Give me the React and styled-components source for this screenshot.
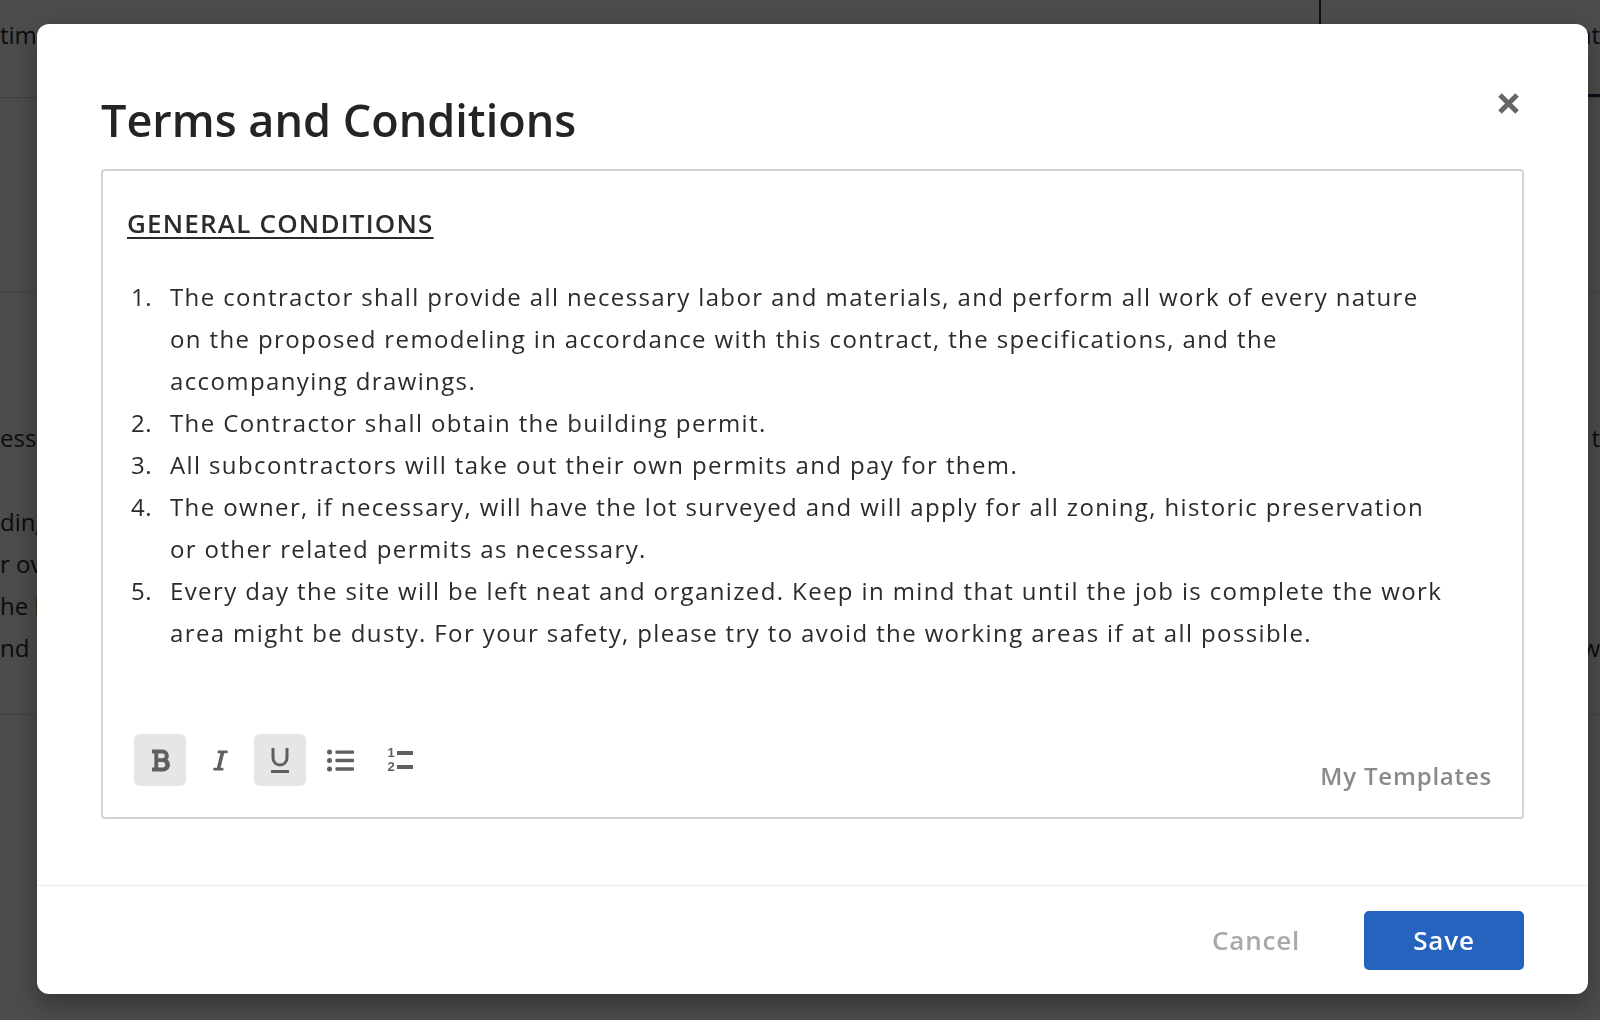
import React from 'react';
import styled, { createGlobalStyle } from 'styled-components';
import { FaBold, FaItalic, FaListUl } from 'react-icons/fa';

const GlobalStyle = createGlobalStyle`
  html, body { margin: 0; padding: 0; }
  body {
    font-family: 'Open Sans', Lato, 'Liberation Sans', sans-serif;
    background: #fff;
    color: #2b2b2b;
  }
  * { box-sizing: border-box; }
`;

// page behind the dialog
const Page = styled.div`
  width: 1600px;
  height: 1020px;
  overflow: hidden;
  background: #fff;
`;

const TopBar = styled.header`
  height: 98px;
  display: flex;
  border-bottom: 1px solid #d6d6d6;
`;

const TopMain = styled.div`
  flex: 1;
  display: flex;
  align-items: flex-start;
  gap: 64px;
  padding-top: 18px;
  font-size: 24px;
  white-space: nowrap;
`;

const JobTitle = styled.span`
  font-weight: 600;
`;

const Saved = styled.span`
  display: flex;
  align-items: center;
  gap: 10px;
  margin-left: 240px;
  color: #555;
`;

const Dot = styled.span`
  width: 14px;
  height: 14px;
  border-radius: 50%;
  background: #2e9b4f;
`;

const TopAside = styled.div`
  width: 281px;
  border-left: 2px solid #1d2d55;
  border-bottom: 3px solid #1d2d55;
  display: flex;
  justify-content: flex-end;
  padding-top: 18px;
  font-size: 24px;
  color: #1d2d55;
`;

const Section = styled.section`
  height: ${(p) => p.$h}px;
  border-bottom: 1px solid #dcdcdc;
  padding-top: ${(p) => p.$pad || 0}px;
  font-size: 24px;
  line-height: 42px;
  white-space: nowrap;
`;

const PageLine = styled.p`
  margin: 0 0 ${(p) => p.$gap || 0}px;
  display: flex;
  justify-content: space-between;
`;

// dialog
const Overlay = styled.div`
  position: fixed;
  inset: 0;
  background: rgba(0, 0, 0, 0.7);
  display: flex;
  align-items: flex-start;
  padding: 24px 0 0 37px;
`;

const Modal = styled.div`
  width: 1551px;
  height: 970px;
  background: #fff;
  border-radius: 12px;
  box-shadow: 0 10px 30px rgba(0, 0, 0, 0.35);
  display: flex;
  flex-direction: column;
`;

const ModalHead = styled.div`
  display: flex;
  justify-content: space-between;
  align-items: flex-start;
  padding: 70px 64px 0;
`;

const Title = styled.h1`
  margin: 0;
  font-size: 45px;
  line-height: 52px;
  font-weight: 600;
  color: #242424;
`;

const CloseButton = styled.button`
  width: 32px;
  height: 32px;
  margin-top: -7px;
  border: 0;
  padding: 0;
  background: none;
  display: flex;
  align-items: center;
  justify-content: center;
  cursor: pointer;
`;

const Editor = styled.div`
  margin: 23px 64px 0;
  height: 650px;
  border: 2px solid #d2d2d2;
  border-radius: 4px;
  display: flex;
  flex-direction: column;
`;

const EditorBody = styled.div`
  flex: 1;
  padding: 37px 70px 0 24px;
  color: #2b2b2b;
`;

const SectionHeading = styled.h2`
  margin: 0;
  font-size: 26px;
  line-height: 30px;
  font-weight: 600;
  letter-spacing: 1.2px;
  text-decoration: underline;
  text-decoration-thickness: 2px;
  text-underline-offset: 4px;
`;

const List = styled.ol`
  list-style: none;
  margin: 38px 0 0;
  padding: 0;
`;

const Item = styled.li`
  display: grid;
  grid-template-columns: 43px 1fr;
  font-size: 24px;
  line-height: 42px;
  letter-spacing: 1.38px;
`;

const Num = styled.span`
  text-align: right;
  padding-right: 18px;
  letter-spacing: 0.5px;
`;

const Toolbar = styled.div`
  display: flex;
  justify-content: space-between;
  align-items: flex-end;
  padding: 0 30px 31px 31px;
`;

const ToolGroup = styled.div`
  display: flex;
  gap: 8px;
`;

const ToolButton = styled.button`
  width: 52px;
  height: 52px;
  border: 0;
  border-radius: 6px;
  padding: 0;
  background: ${(p) => (p.$active ? '#e6e6e6' : 'transparent')};
  color: #5f5f5f;
  display: flex;
  align-items: center;
  justify-content: center;
  cursor: pointer;
`;

const OlIcon = styled.span`
  display: grid;
  grid-template-columns: auto 16px;
  column-gap: 2px;
  align-items: center;
  font: 700 13px/14.5px 'Liberation Sans', Arial, sans-serif;
  color: #5f5f5f;
`;

const OlBar = styled.span`
  height: 3.6px;
  background: currentColor;
`;

const TemplatesLink = styled.a`
  margin-bottom: -5px;
  font-size: 24px;
  line-height: 30px;
  font-weight: 600;
  letter-spacing: 0.8px;
  color: #8a8a8a;
  cursor: pointer;
`;

const Spacer = styled.div`
  flex: 1;
`;

const Footer = styled.div`
  height: 109px;
  border-top: 1px solid #ececec;
  display: flex;
  align-items: center;
  justify-content: flex-end;
  padding: 0 64px;
  gap: 33px;
`;

const CancelButton = styled.button`
  width: 150px;
  height: 59px;
  border: 0;
  background: none;
  font-family: inherit;
  font-size: 26px;
  font-weight: 600;
  letter-spacing: 0.8px;
  color: #a9a9a9;
  cursor: pointer;
`;

const SaveButton = styled.button`
  width: 160px;
  height: 59px;
  border: 0;
  border-radius: 5px;
  background: #2563be;
  font-family: inherit;
  font-size: 26px;
  font-weight: 600;
  letter-spacing: 0.8px;
  color: #fff;
  cursor: pointer;
`;

const CloseIcon = () => (
  <svg width="25" height="25" viewBox="0 0 25 25">
    <path d="M4 4 L21 21 M21 4 L4 21" stroke="#666" strokeWidth="5" strokeLinecap="butt" />
  </svg>
);

const UnderlineIcon = () => (
  <svg width="26" height="30" viewBox="0 0 26 30">
    <path d="M6 3 V13 A7 7 0 0 0 20 13 V3" fill="none" stroke="currentColor" strokeWidth="3" />
    <rect x="4" y="25" width="18" height="3" fill="currentColor" />
  </svg>
);

const OrderedIcon = () => (
  <OlIcon>
    <span>1</span>
    <OlBar />
    <span>2</span>
    <OlBar />
  </OlIcon>
);

const items = [
  'The contractor shall provide all necessary labor and materials, and perform all work of every nature on the proposed remodeling in accordance with this contract, the specifications, and the accompanying drawings.',
  'The Contractor shall obtain the building permit.',
  'All subcontractors will take out their own permits and pay for them.',
  'The owner, if necessary, will have the lot surveyed and will apply for all zoning, historic preservation or other related permits as necessary.',
  'Every day the site will be left neat and organized. Keep in mind that until the job is complete the work area might be dusty. For your safety, please try to avoid the working areas if at all possible.',
];

const App = () => (
  <>
    <GlobalStyle />
    <Page>
      <TopBar>
        <TopMain>
          <span>timeline</span>
          <JobTitle>$ 37 Kitchen Remodeling</JobTitle>
          <Saved>
            <Dot />
            All Changes Saved
          </Saved>
        </TopMain>
        <TopAside>Content</TopAside>
      </TopBar>
      <Section $h={195} />
      <Section $h={422} $pad={124}>
        <PageLine $gap={42}>
          <span>ess</span>
          <span>t</span>
        </PageLine>
        <PageLine>
          <span>ding</span>
        </PageLine>
        <PageLine>
          <span>r over</span>
        </PageLine>
        <PageLine>
          <span>he lot</span>
        </PageLine>
        <PageLine>
          <span>nd</span>
          <span>w</span>
        </PageLine>
      </Section>
    </Page>

    <Overlay>
      <Modal>
        <ModalHead>
          <Title>Terms and Conditions</Title>
          <CloseButton aria-label="Close">
            <CloseIcon />
          </CloseButton>
        </ModalHead>

        <Editor>
          <EditorBody>
            <SectionHeading>GENERAL CONDITIONS</SectionHeading>
            <List>
              {items.map((text, i) => (
                <Item key={i}>
                  <Num>{i + 1}.</Num>
                  <span>{text}</span>
                </Item>
              ))}
            </List>
          </EditorBody>
          <Toolbar>
            <ToolGroup>
              <ToolButton $active aria-label="Bold">
                <FaBold size={25} />
              </ToolButton>
              <ToolButton aria-label="Italic">
                <FaItalic size={23} />
              </ToolButton>
              <ToolButton $active aria-label="Underline">
                <UnderlineIcon />
              </ToolButton>
              <ToolButton aria-label="Bulleted list">
                <FaListUl size={27} />
              </ToolButton>
              <ToolButton aria-label="Numbered list">
                <OrderedIcon />
              </ToolButton>
            </ToolGroup>
            <TemplatesLink>My Templates</TemplatesLink>
          </Toolbar>
        </Editor>

        <Spacer />
        <Footer>
          <CancelButton>Cancel</CancelButton>
          <SaveButton>Save</SaveButton>
        </Footer>
      </Modal>
    </Overlay>
  </>
);

export default App;
